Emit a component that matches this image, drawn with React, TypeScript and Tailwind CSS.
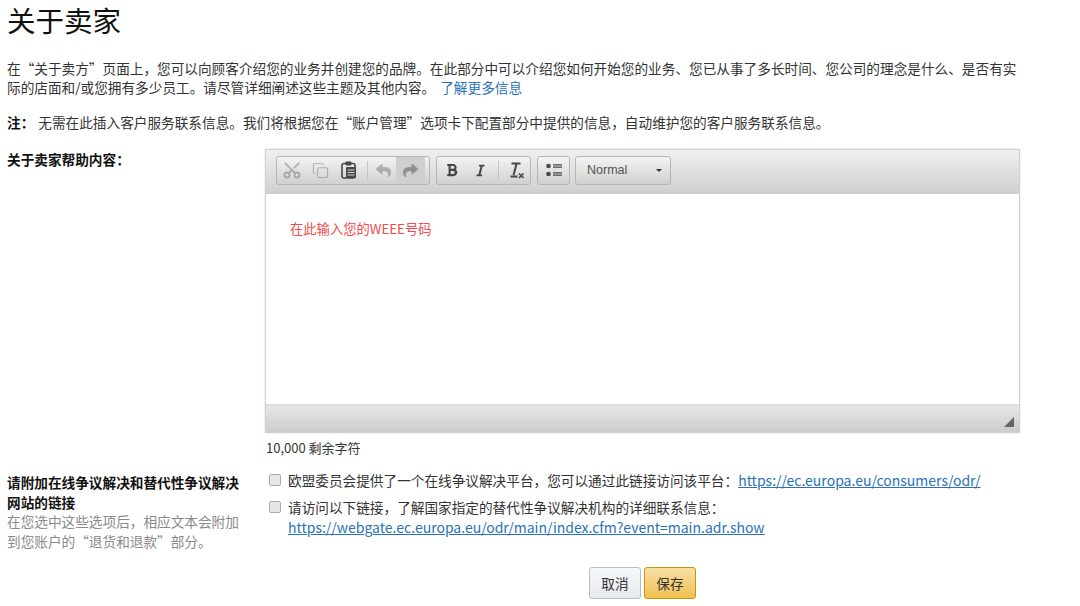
import React from 'react';
import { FaBold, FaItalic, FaReply, FaShare } from 'react-icons/fa';
import { Scissors, Copy } from 'lucide-react';

const FONT = { fontFamily: '"Noto Sans CJK SC", "Noto Sans", sans-serif' };
const LATIN = { fontFamily: '"Liberation Sans", Arial, sans-serif' };

const ToolbarDivider = () => <span className="block h-[18px] w-px bg-[#c4c4c4] mx-[3px]" />;

const PasteIcon = () => (
  <svg width="16" height="18" viewBox="0 0 16 18">
    <rect x="1" y="2.5" width="13" height="14.5" rx="2" fill="none" stroke="#474747" strokeWidth="1.6" />
    <rect x="4.5" y="0.5" width="6" height="4" rx="1" fill="#474747" />
    <rect x="5" y="6" width="10" height="11" rx="1" fill="#474747" />
    <path d="M6.5 9h7M6.5 11.5h7M6.5 14h7" stroke="#d8d8d8" strokeWidth="1" />
  </svg>
);

const ListIcon = () => (
  <svg width="16" height="14" viewBox="0 0 16 14">
    <circle cx="2.5" cy="3" r="2.3" fill="#474747" />
    <circle cx="2.5" cy="11" r="2.3" fill="#474747" />
    <path d="M7 1.8h9M7 4.2h9M7 9.8h9M7 12.2h9" stroke="#474747" strokeWidth="1.3" />
  </svg>
);

const ClearFormatIcon = () => (
  <svg width="17" height="17" viewBox="0 0 17 17">
    <path d="M3.5 1.5h9M8.6 1.5 5.6 13M2.5 14.5h7" stroke="#474747" strokeWidth="2" fill="none" />
    <path d="M11 11.5l4.5 4.5M15.5 11.5 11 16" stroke="#474747" strokeWidth="1.7" />
  </svg>
);

const ToolbarGroup: React.FC<{ className: string; children: React.ReactNode }> = ({ className, children }) => (
  <div className={`h-[29px] flex items-stretch rounded-[3px] border border-[#b6b6b6] bg-gradient-to-b from-[#f4f4f4] to-[#cfd1cf] overflow-hidden ${className}`}>
    {children}
  </div>
);

const ToolButton: React.FC<{ className?: string; children: React.ReactNode }> = ({ className = 'w-[29px]', children }) => (
  <span className={`flex items-center justify-center ${className}`}>{children}</span>
);

export default function App() {
  return (
    <div lang="zh-CN" className="w-[1080px] h-[606px] overflow-hidden bg-white text-[13.65px] leading-[18.5px] text-[#333] pl-[7px]" style={FONT}>
      <h1 className="text-[28.5px] leading-[40px] text-[#111] font-normal">关于卖家</h1>

      <p className="mt-[19px] w-[1012px]">
        在“关于卖方”页面上，您可以向顾客介绍您的业务并创建您的品牌。在此部分中可以介绍您如何开始您的业务、您已从事了多长时间、您公司的理念是什么、是否有实际的店面和/或您拥有多少员工。请尽管详细阐述这些主题及其他内容。
        <span className="text-[#2a72b8] ml-[5px]">了解更多信息</span>
      </p>

      <p className="mt-[17px]">
        <b className="text-[#111]">注：</b>
        <span className="ml-[4px]">无需在此插入客户服务联系信息。我们将根据您在“账户管理”选项卡下配置部分中提供的信息，自动维护您的客户服务联系信息。</span>
      </p>

      <div className="mt-[17px] flex">
        <div className="w-[258px] shrink-0 pt-[1px] font-bold text-[#111]">关于卖家帮助内容：</div>
        <div>
          <div className="w-[755px] h-[284px] flex flex-col border border-[#d1d1d1] shadow-[0_0_2px_rgba(0,0,0,0.15)]">
            <div className="h-[44px] shrink-0 flex gap-[6px] pl-[10px] pt-[6px] border-b-2 border-[#cfcfcf] bg-gradient-to-b from-[#f0f0f0] to-[#d0d0d0]">
              <ToolbarGroup className="w-[154px]">
                <ToolButton className="w-[29px] opacity-30"><Scissors size={20} color="#333" strokeWidth={2.2} className="-rotate-90" /></ToolButton>
                <ToolButton className="w-[28px] opacity-30"><Copy size={17} color="#333" strokeWidth={1.5} /></ToolButton>
                <ToolButton className="w-[30px]"><PasteIcon /></ToolButton>
                <span className="self-center"><ToolbarDivider /></span>
                <ToolButton className="w-[25px] opacity-30"><FaReply size={15} color="#333" /></ToolButton>
                <ToolButton className="w-[29px] bg-[#cfcfcf]"><span className="opacity-40"><FaShare size={15} color="#333" /></span></ToolButton>
              </ToolbarGroup>
              <ToolbarGroup className="w-[95px]">
                <ToolButton className="w-[29px]"><FaBold size={14} color="#474747" /></ToolButton>
                <ToolButton className="w-[29px]"><FaItalic size={13} color="#474747" /></ToolButton>
                <span className="self-center"><ToolbarDivider /></span>
                <ToolButton className="w-[28px]"><ClearFormatIcon /></ToolButton>
              </ToolbarGroup>
              <ToolbarGroup className="w-[33px]">
                <ToolButton className="w-full"><ListIcon /></ToolButton>
              </ToolbarGroup>
              <ToolbarGroup className="w-[96px] ml-[-1px]">
                <div className="w-full flex items-center justify-between pl-[11px] pr-[8px] text-[12.5px] text-[#555]" style={LATIN}>
                  <span>Normal</span>
                  <span className="w-0 h-0 border-x-[3px] border-x-transparent border-t-[3px] border-t-[#333]" />
                </div>
              </ToolbarGroup>
            </div>
            <div className="flex-1 bg-white pl-[24px] pt-[26px] text-[13.3px] text-[#f04b4b]">在此输入您的WEEE号码</div>
            <div className="h-[28px] shrink-0 flex items-end justify-end pr-[5px] pb-[5px] border-t-2 border-[#dcdcdc] bg-gradient-to-b from-[#e6e6e6] to-[#cccccc]">
              <span className="w-0 h-0 border-l-[10px] border-l-transparent border-b-[10px] border-b-[#666]" />
            </div>
          </div>
          <div className="mt-[6px] pl-[1px] text-[13px]">10,000 剩余字符</div>
        </div>
      </div>

      <div className="mt-[16px] flex">
        <div className="w-[258px] shrink-0 pr-[20px]">
          <div className="font-bold text-[#111] leading-[19.5px]">请附加在线争议解决和替代性争议解决网站的链接</div>
          <div className="text-[#8a8a8a] leading-[19.5px]">在您选中这些选项后，相应文本会附加到您账户的“退货和退款”部分。</div>
        </div>
        <div className="flex flex-col gap-[7px] leading-[20px] -mt-[3px]">
          <label className="flex">
            <span className="mt-[4px] ml-[4px] w-[12px] h-[12px] rounded-[2px] border border-[#aaa] bg-[#e6e6e6] shrink-0" />
            <span className="ml-[7px]">
              欧盟委员会提供了一个在线争议解决平台，您可以通过此链接访问该平台：
              <a className="text-[#2a72b8] underline text-[14px]">https://ec.europa.eu/consumers/odr/</a>
            </span>
          </label>
          <label className="flex">
            <span className="mt-[4px] ml-[4px] w-[12px] h-[12px] rounded-[2px] border border-[#aaa] bg-[#e6e6e6] shrink-0" />
            <span className="ml-[7px]">
              请访问以下链接，了解国家指定的替代性争议解决机构的详细联系信息：
              <br />
              <a className="text-[#2a72b8] underline text-[14px]">https://webgate.ec.europa.eu/odr/main/index.cfm?event=main.adr.show</a>
            </span>
          </label>
        </div>
      </div>

      <div className="mt-[16px] ml-[582px] flex gap-[3px]">
        <button className="w-[52px] h-[32px] rounded-[3px] border border-[#bbb] bg-gradient-to-b from-[#f7f8fa] to-[#e7e9ec]">取消</button>
        <button className="w-[52px] h-[32px] rounded-[3px] border border-[#c89411] bg-gradient-to-b from-[#f7dfa5] to-[#f0c14b]">保存</button>
      </div>
    </div>
  );
}
